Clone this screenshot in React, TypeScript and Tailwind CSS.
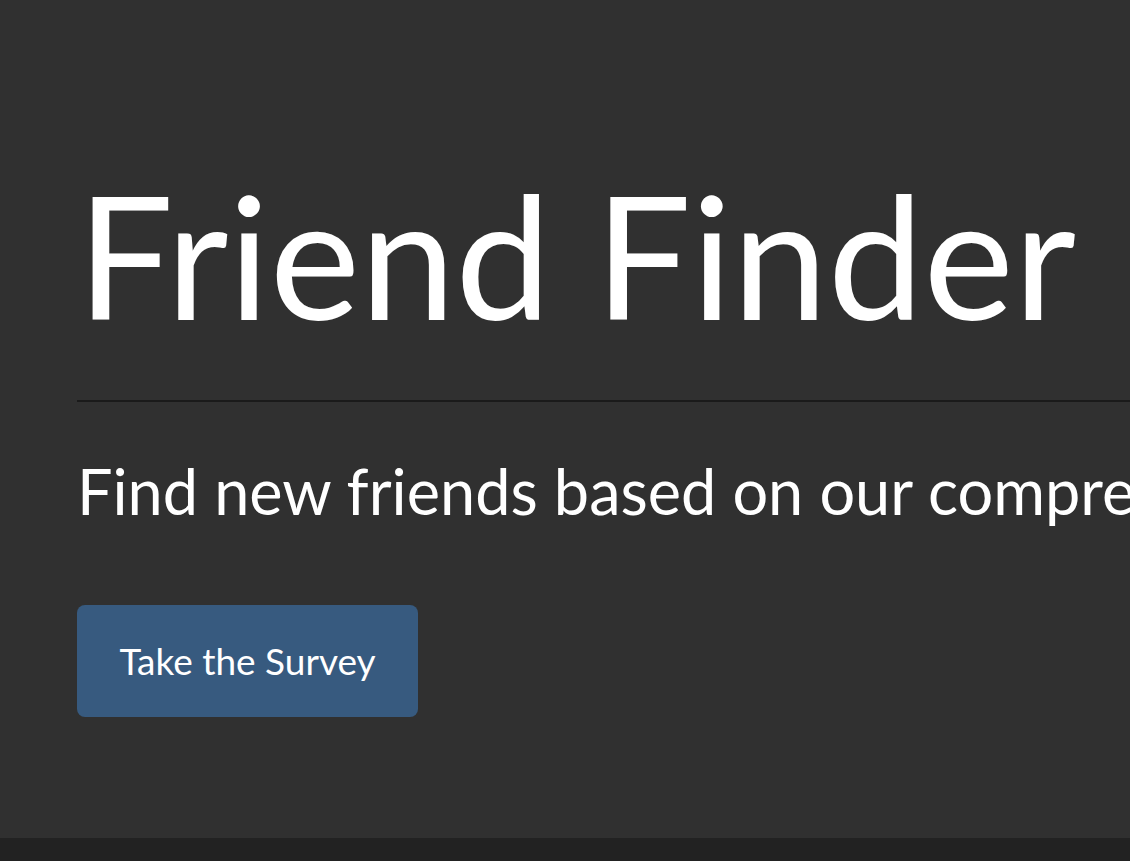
export default function App() {
  return (
    <div className="w-full h-[861px] overflow-hidden flex flex-col bg-[#303030] text-white" style={{ fontFamily: "Lato, 'Open Sans', sans-serif" }}>
      <main className="flex-1 pl-[77px] pt-[151px]">
        <h1 className="text-[171px] leading-[1.2] font-normal whitespace-nowrap">Friend Finder</h1>
        <hr className="mt-[44px] w-[1200px] border-0 h-[2px] bg-[#1a1a1a]" />
        <p className="mt-[51px] text-[63px] leading-[1.2] whitespace-nowrap">Find new friends based on our comprehensive survey</p>
        <button className="mt-[76px] w-[341px] h-[112px] rounded-[8px] bg-[#375a7f] text-[37px] text-white flex items-center justify-center">
          Take the Survey
        </button>
      </main>
      <footer className="h-[23px] bg-[#222222]" />
    </div>
  );
}
